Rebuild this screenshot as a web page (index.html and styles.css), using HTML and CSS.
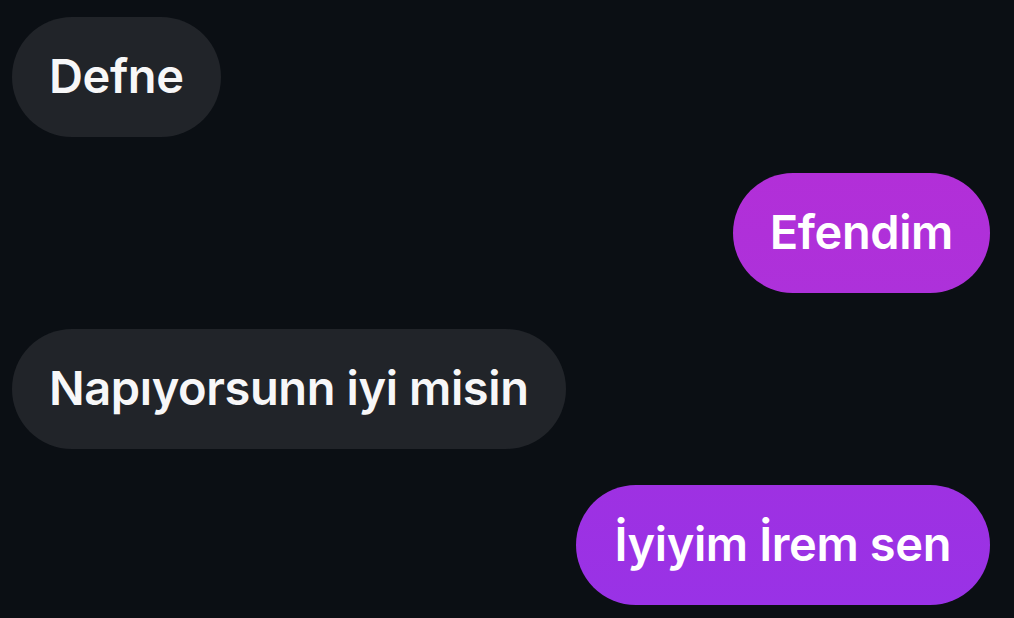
FILE: index.html
```html
<!DOCTYPE html>
<html lang="tr">
<head>
    <meta charset="UTF-8">
    <meta name="viewport" content="width=device-width, initial-scale=1.0">
    <title>Mesajlar</title>
    <link rel="stylesheet" href="styles.css">
</head>
<body>
    <div class="chat">
        <div class="message incoming">
            <div class="bubble">Defne</div>
        </div>
        <div class="message outgoing">
            <div class="bubble top">Efendim</div>
        </div>
        <div class="message incoming">
            <div class="bubble">Napıyorsunn iyi misin</div>
        </div>
        <div class="message outgoing">
            <div class="bubble bottom">İyiyim İrem sen</div>
        </div>
    </div>
</body>
</html>
```

FILE: styles.css
```css
* {
    margin: 0;
    padding: 0;
    box-sizing: border-box;
}

body {
    font-family: 'Inter', 'Noto Sans', sans-serif;
    background: #0b0f14;
    min-height: 100vh;
    overflow: hidden;
}

.chat {
    display: flex;
    flex-direction: column;
    gap: 36px;
    padding: 17px 24px 0 12px;
}

.message {
    display: flex;
}

.message.outgoing {
    justify-content: flex-end;
}

.bubble {
    height: 120px;
    border-radius: 60px;
    padding: 0 37px 4px;
    display: flex;
    align-items: center;
    font-size: 47px;
    font-weight: 600;
    letter-spacing: -0.4px;
    color: #f7f7f8;
    white-space: nowrap;
}

.incoming .bubble {
    background: #212429;
}

/* giden mesajlar: ust tarafta pembe-mor, alta dogru mora kayiyor */
.outgoing .bubble {
    color: #fff;
}

.bubble.top {
    background: linear-gradient(180deg, #b22fd8, #ad31da);
}

.bubble.bottom {
    padding: 0 39px 4px;
    background: linear-gradient(180deg, #9e31e2, #9932e6);
}
```
